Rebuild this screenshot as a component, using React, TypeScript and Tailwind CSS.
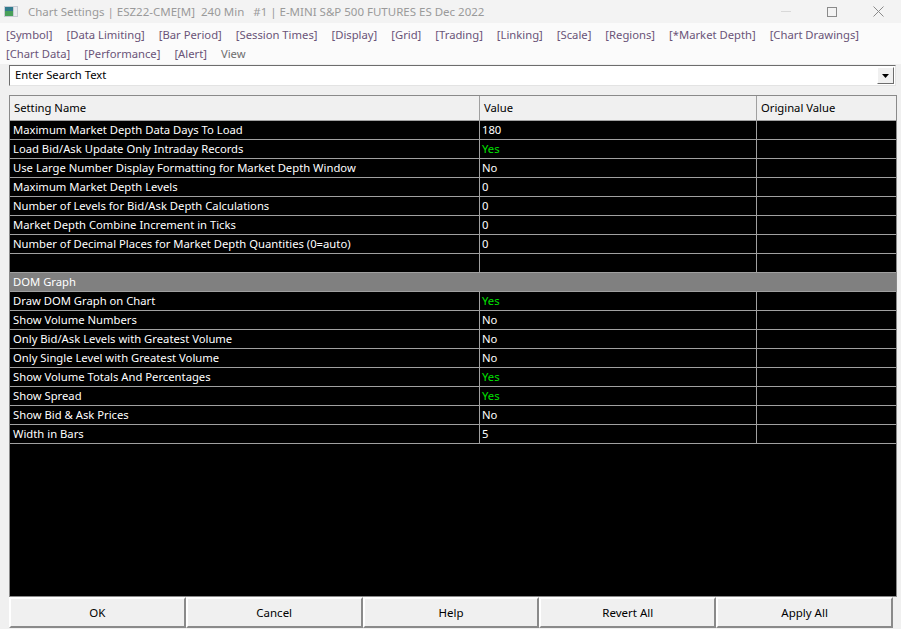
import React from "react"

const tabsRow1 = [
  "[Symbol]",
  "[Data Limiting]",
  "[Bar Period]",
  "[Session Times]",
  "[Display]",
  "[Grid]",
  "[Trading]",
  "[Linking]",
  "[Scale]",
  "[Regions]",
  "[*Market Depth]",
  "[Chart Drawings]",
]
const tabsRow2 = ["[Chart Data]", "[Performance]", "[Alert]", "View"]

type Row = { name: string; value?: string; section?: boolean }

const rows: Row[] = [
  { name: "Maximum Market Depth Data Days To Load", value: "180" },
  { name: "Load Bid/Ask Update Only Intraday Records", value: "Yes" },
  { name: "Use Large Number Display Formatting for Market Depth Window", value: "No" },
  { name: "Maximum Market Depth Levels", value: "0" },
  { name: "Number of Levels for Bid/Ask Depth Calculations", value: "0" },
  { name: "Market Depth Combine Increment in Ticks", value: "0" },
  { name: "Number of Decimal Places for Market Depth Quantities (0=auto)", value: "0" },
  { name: "", value: "" },
  { name: "DOM Graph", section: true },
  { name: "Draw DOM Graph on Chart", value: "Yes" },
  { name: "Show Volume Numbers", value: "No" },
  { name: "Only Bid/Ask Levels with Greatest Volume", value: "No" },
  { name: "Only Single Level with Greatest Volume", value: "No" },
  { name: "Show Volume Totals And Percentages", value: "Yes" },
  { name: "Show Spread", value: "Yes" },
  { name: "Show Bid & Ask Prices", value: "No" },
  { name: "Width in Bars", value: "5" },
]

const buttons = ["OK", "Cancel", "Help", "Revert All", "Apply All"]

export default function App() {
  return (
    <div
      className="w-[901px] h-[629px] flex flex-col bg-[#f0f0f0] text-[11.25px] overflow-hidden"
      style={{ fontFamily: '"Noto Sans", "Open Sans", sans-serif' }}
    >
      {/* title bar */}
      <div className="h-[23px] flex items-center bg-[#f3f3f3] shrink-0">
        <svg width="14" height="11" viewBox="0 0 14 11" className="ml-[4px] mr-[10px]">
          <rect x="0" y="0" width="14" height="11" fill="#c8ccd4" />
          <rect x="1" y="1" width="8" height="9" fill="#2f7a8c" />
          <rect x="1" y="5" width="8" height="5" fill="#49a05a" />
          <rect x="10" y="1" width="3" height="9" fill="#e8eaee" />
        </svg>
        <span className="text-[#9a9a9a] text-[11.5px] whitespace-pre">
          Chart Settings | ESZ22-CME[M]  240 Min   #1 | E-MINI S&amp;P 500 FUTURES ES Dec 2022
        </span>
        <div className="ml-auto flex items-center h-full">
          <div className="w-[46px] h-full flex items-center justify-center">
            <div className="w-[10px] h-px bg-[#d8d8d8]" />
          </div>
          <div className="w-[46px] h-full flex items-center justify-center">
            <div className="w-[10px] h-[10px] border border-[#8a8a8a]" />
          </div>
          <div className="w-[46px] h-full flex items-center justify-center">
            <svg width="11" height="11" viewBox="0 0 11 11">
              <path d="M0.5 0.5 L10.5 10.5 M10.5 0.5 L0.5 10.5" stroke="#8a8a8a" strokeWidth="1" />
            </svg>
          </div>
        </div>
      </div>

      {/* tab links */}
      <div className="bg-[#fbfbfb] pl-[6px] pt-[3px] shrink-0">
        <div className="flex gap-x-[14px] h-[19px] items-center">
          {tabsRow1.map((t) => (
            <span key={t} className="text-[#6a5478] whitespace-nowrap">
              {t}
            </span>
          ))}
        </div>
        <div className="flex gap-x-[14px] h-[19px] items-center">
          {tabsRow2.map((t) => (
            <span
              key={t}
              className={t === "View" ? "text-[#6e6e6e]" : "text-[#6a5478] whitespace-nowrap"}
            >
              {t}
            </span>
          ))}
        </div>
      </div>

      {/* search */}
      <div className="pl-[9px] pr-[5px] pt-[1px] shrink-0">
        <div className="h-[21px] flex items-center bg-white border border-t-[#6d6d6d] border-l-[#6d6d6d] border-r-[#e3e3e3] border-b-[#e3e3e3] pr-[1px]">
          <span className="pl-[5px] text-black flex-1">Enter Search Text</span>
          <div className="w-[17px] h-[17px] bg-[#f0f0f0] border border-t-white border-l-white border-r-[#6d6d6d] border-b-[#6d6d6d] flex items-center justify-center">
            <svg width="7" height="4" viewBox="0 0 7 4">
              <path d="M0 0 H7 L3.5 4 Z" fill="#000" />
            </svg>
          </div>
        </div>
      </div>

      {/* table */}
      <div className="flex-1 ml-[9px] mr-[4px] mt-[9px] border border-[#8a8a8a] bg-black flex flex-col min-h-0">
        <div className="flex h-[25px] bg-[#f0f0f0] border-b border-[#a0a0a0] shrink-0">
          <div className="w-[470px] pl-[4px] flex items-center border-r border-[#a0a0a0] text-black">
            Setting Name
          </div>
          <div className="w-[277px] pl-[4px] flex items-center border-r border-[#a0a0a0] text-black">
            Value
          </div>
          <div className="flex-1 pl-[4px] flex items-center text-black">Original Value</div>
        </div>
        {rows.map((r, i) =>
          r.section ? (
            <div
              key={i}
              className="h-[19px] flex items-center bg-[#808080] border-b border-[#a0a0a0] pl-[3px] text-white"
            >
              {r.name}
            </div>
          ) : (
            <div key={i} className="h-[19px] flex border-b border-[#a0a0a0]">
              <div className="w-[470px] pl-[3px] flex items-center border-r border-[#a0a0a0] text-white whitespace-nowrap">
                {r.name}
              </div>
              <div
                className={`w-[277px] pl-[2px] flex items-center border-r border-[#a0a0a0] ${
                  r.value === "Yes" ? "text-[#00e000]" : "text-white"
                }`}
              >
                {r.value}
              </div>
              <div className="flex-1" />
            </div>
          )
        )}
      </div>

      {/* buttons */}
      <div className="flex ml-[9px] mr-[8px] mb-[1px] h-[31px] shrink-0">
        {buttons.map((b) => (
          <button
            key={b}
            className="flex-1 bg-[#f0f0f0] text-black text-[11.5px] border-2 border-t-white border-l-white border-r-[#8a8a8a] border-b-[#8a8a8a] flex items-center justify-center"
          >
            {b}
          </button>
        ))}
      </div>
    </div>
  )
}
